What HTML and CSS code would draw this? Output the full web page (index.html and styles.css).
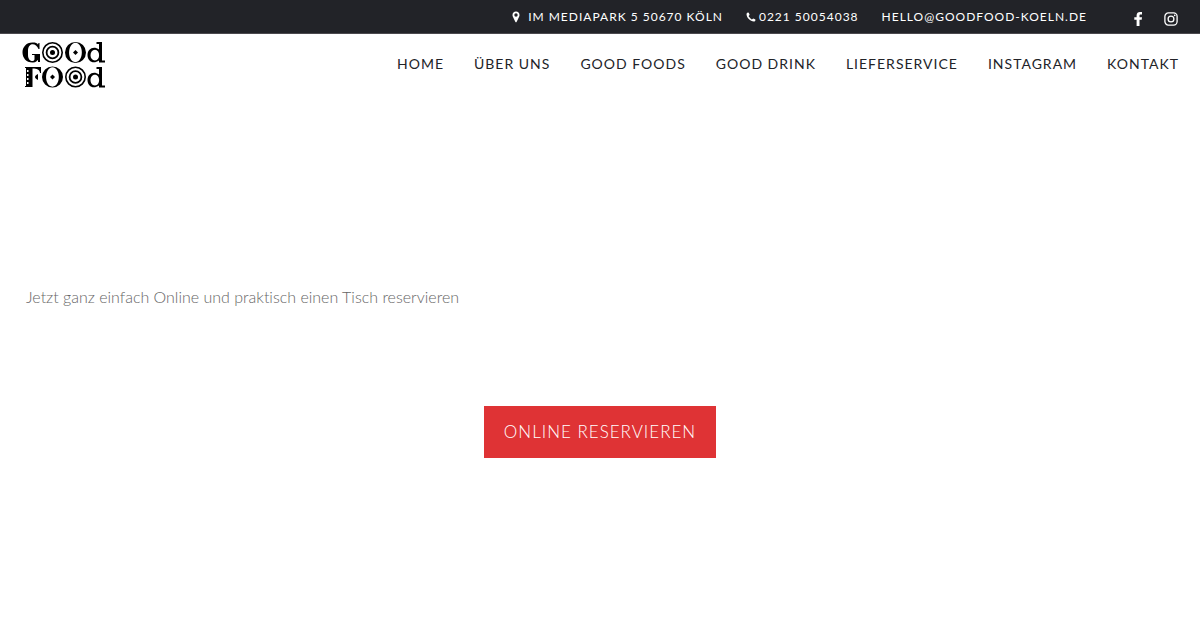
FILE: index.html
```html
<!DOCTYPE html>
<html lang="de">
<head>
<meta charset="utf-8">
<meta name="viewport" content="width=device-width, initial-scale=1">
<title>Good Food Köln</title>
<link rel="stylesheet" href="styles.css">
</head>
<body>
<div class="topbar">
  <a class="contact contact-address" href="#anfahrt">
    <svg class="pin" viewBox="0 0 8 12" aria-hidden="true"><path fill-rule="evenodd" d="M4 0.5C1.9 0.5.5 2 .5 4c0 .7.1 1.100.4 1.700L3.300 10.700C3.600 11.400 4.400 11.400 4.700 10.700L7.100 5.700C7.400 5.100 7.500 4.700 7.500 4 7.500 2 6.100.5 4 .5ZM4 2.300a1.700 1.700 0 1 1 0 3.400a1.700 1.700 0 1 1 0-3.400Z"/></svg>
    <span>IM MEDIAPARK 5 50670 KÖLN</span>
  </a>
  <a class="contact contact-phone" href="tel:+4922150054038">
    <svg class="phone" viewBox="0 0 10 10" aria-hidden="true"><path d="M.5 2C.5 1.200 1.500.5 2.300.5 2.700.5 3.600 2.300 3.600 2.700 3.600 3.200 2.600 3.700 2.600 4.100 2.600 4.800 5.100 7.300 5.900 7.400 6.300 7.400 6.800 6.400 7.300 6.400 7.700 6.400 9.500 7.300 9.500 7.700 9.500 8.600 8.800 9.500 7.900 9.500 4.300 9.500.5 5.600.5 2Z"/></svg>
    <span>0221 50054038</span>
  </a>
  <a class="contact" href="mailto:hello@goodfood-koeln.de">HELLO@GOODFOOD-KOELN.DE</a>
  <div class="social">
    <a href="#facebook" aria-label="Facebook">
      <svg viewBox="0 0 14 14" aria-hidden="true"><path d="M11 0v2.400H9.700C8.700 2.400 8.500 2.900 8.500 3.600v1.600h2.500l-.3 2.600H8.500V14H5.600V7.800H3.300V5.200h2.300V3.300C5.600 1.200 7 0 9 0Z"/></svg>
    </a>
    <a href="#instagram" aria-label="Instagram">
      <svg viewBox="0 0 14 14" aria-hidden="true"><g fill="none" stroke="currentColor" stroke-width="1.300"><rect x="0.900" y="0.900" width="12.200" height="12.200" rx="3.500"/><circle cx="7" cy="7" r="2.900"/></g><circle cx="10.700" cy="3.300" r=".85"/></svg>
    </a>
  </div>
</div>
<header class="header">
  <a class="logo" href="#home" aria-label="Good Food">
    <svg viewBox="0 0 84 48" aria-hidden="true">
      <defs>
        <g id="target">
          <circle r="9.700" fill="none" stroke="#000" stroke-width="1.600"/>
          <circle r="5.900" fill="none" stroke="#000" stroke-width="1.800"/>
          <circle r="2.500"/>
        </g>
        <g id="ring">
          <path fill-rule="evenodd" d="M0-10.500A10.500 10.500 0 1 1 0 10.500A10.500 10.500 0 1 1 0-10.500ZM0-9.700C-8.500-9-8.500 9 0 9.700C8.500 9 8.500-9 0-9.700Z"/>
          <path d="M0-2.500 2.500 0 0 2.500-2.500 0Z"/>
        </g>
        <g id="stem-letter">
          <path fill-rule="evenodd" d="M77 8.500C71.500 4.500 65.500 8 65.500 14C65.500 20.500 71.500 23.500 77 19.500V21.500H83V19.500H80V1H74.500V3H77ZM73 8.700C78.500 8.700 78.500 19.500 73 19.500C67 19.500 67 8.700 73 8.700Z"/>
        </g>
      </defs>
      <path d="M11 1.500C-3 1-3 22 11 21.500C14 21.500 15 19.500 16 19V21H18V13H10V14H12.500V18C12.500 21.500 6 21 6 14V9C6.500 1.500 14 1.500 16.500 8H17.500V2H16.500L16 3.500C15 2 13.500 1.500 11 1.500Z"/>
      <use href="#target" x="30.500" y="11.500"/>
      <use href="#ring" x="53.500" y="11.500"/>
      <use href="#stem-letter"/>
      <path d="M3 26H19V32H18C17.500 28.500 15 27.500 10.500 27.500V46H3V45H4V27H3ZM16 33V39C14 38 13 37 13 36S14 34 16 33Z"/>
      <path fill="#fff" d="M5 29h1.500v2H5ZM5 33h1.500v2H5ZM5 37h1.500v2H5ZM5 41h1.500v2H5Z"/>
      <use href="#ring" x="30.500" y="36"/>
      <use href="#target" x="53.500" y="36"/>
      <use href="#stem-letter" y="25"/>
    </svg>
  </a>
  <nav class="nav" aria-label="Hauptmenü">
    <a href="#home">HOME</a>
    <a href="#ueber-uns">ÜBER UNS</a>
    <a href="#foods">GOOD FOODS</a>
    <a href="#drink">GOOD DRINK</a>
    <a href="#lieferservice">LIEFERSERVICE</a>
    <a href="#instagram">INSTAGRAM</a>
    <a href="#kontakt">KONTAKT</a>
  </nav>
</header>
<main class="main">
  <p class="intro">Jetzt ganz einfach Online und praktisch einen Tisch reservieren</p>
  <button class="reserve" type="button">ONLINE RESERVIEREN</button>
</main>
</body>
</html>
```
FILE: styles.css
```css
* {
  box-sizing: border-box;
}

body {
  margin: 0;
  background: #fff;
  color: #222328;
  font-family: Lato, "Liberation Sans", sans-serif;
}

a {
  color: inherit;
  text-decoration: none;
}

svg {
  display: block;
  fill: currentColor;
}

.topbar {
  display: flex;
  justify-content: flex-end;
  align-items: center;
  min-height: 34px;
  padding: 0 22px;
  background: #222328;
  border-bottom: 1px solid #4b494e;
  color: #fff;
}

.contact {
  display: flex;
  align-items: center;
  margin-right: 23px;
  font-size: 12px;
  line-height: 32px;
  letter-spacing: 1px;
}

.contact-address {
  gap: 8px;
}

.contact-phone {
  gap: 3px;
}

.pin {
  width: 8px;
  height: 12px;
}

.phone {
  width: 10px;
  height: 10px;
}

.social {
  display: flex;
  gap: 19px;
  margin-left: 21px;
  padding-top: 4px;
}

.social svg {
  width: 14px;
  height: 14px;
}

.header {
  display: flex;
  justify-content: space-between;
  align-items: center;
  padding: 7px 21px 5px 22px;
}

.logo svg {
  width: 84px;
  height: 48px;
  color: #000;
}

.nav {
  display: flex;
  gap: 30px;
  margin-bottom: 2px;
  font-size: 14px;
  line-height: 24px;
  letter-spacing: 1px;
}

.main {
  display: flex;
  flex-direction: column;
  align-items: center;
  padding: 191px 26px 0;
}

.intro {
  align-self: stretch;
  margin: 0 0 97px;
  color: #666;
  font-size: 16px;
  font-weight: 300;
  font-variant-ligatures: none;
  line-height: 24px;
}

.reserve {
  padding: 14px 20px;
  border: 0;
  background: #df3335;
  color: #fff;
  font-family: inherit;
  font-size: 17px;
  font-weight: 300;
  line-height: 24px;
  letter-spacing: 1px;
}
```
